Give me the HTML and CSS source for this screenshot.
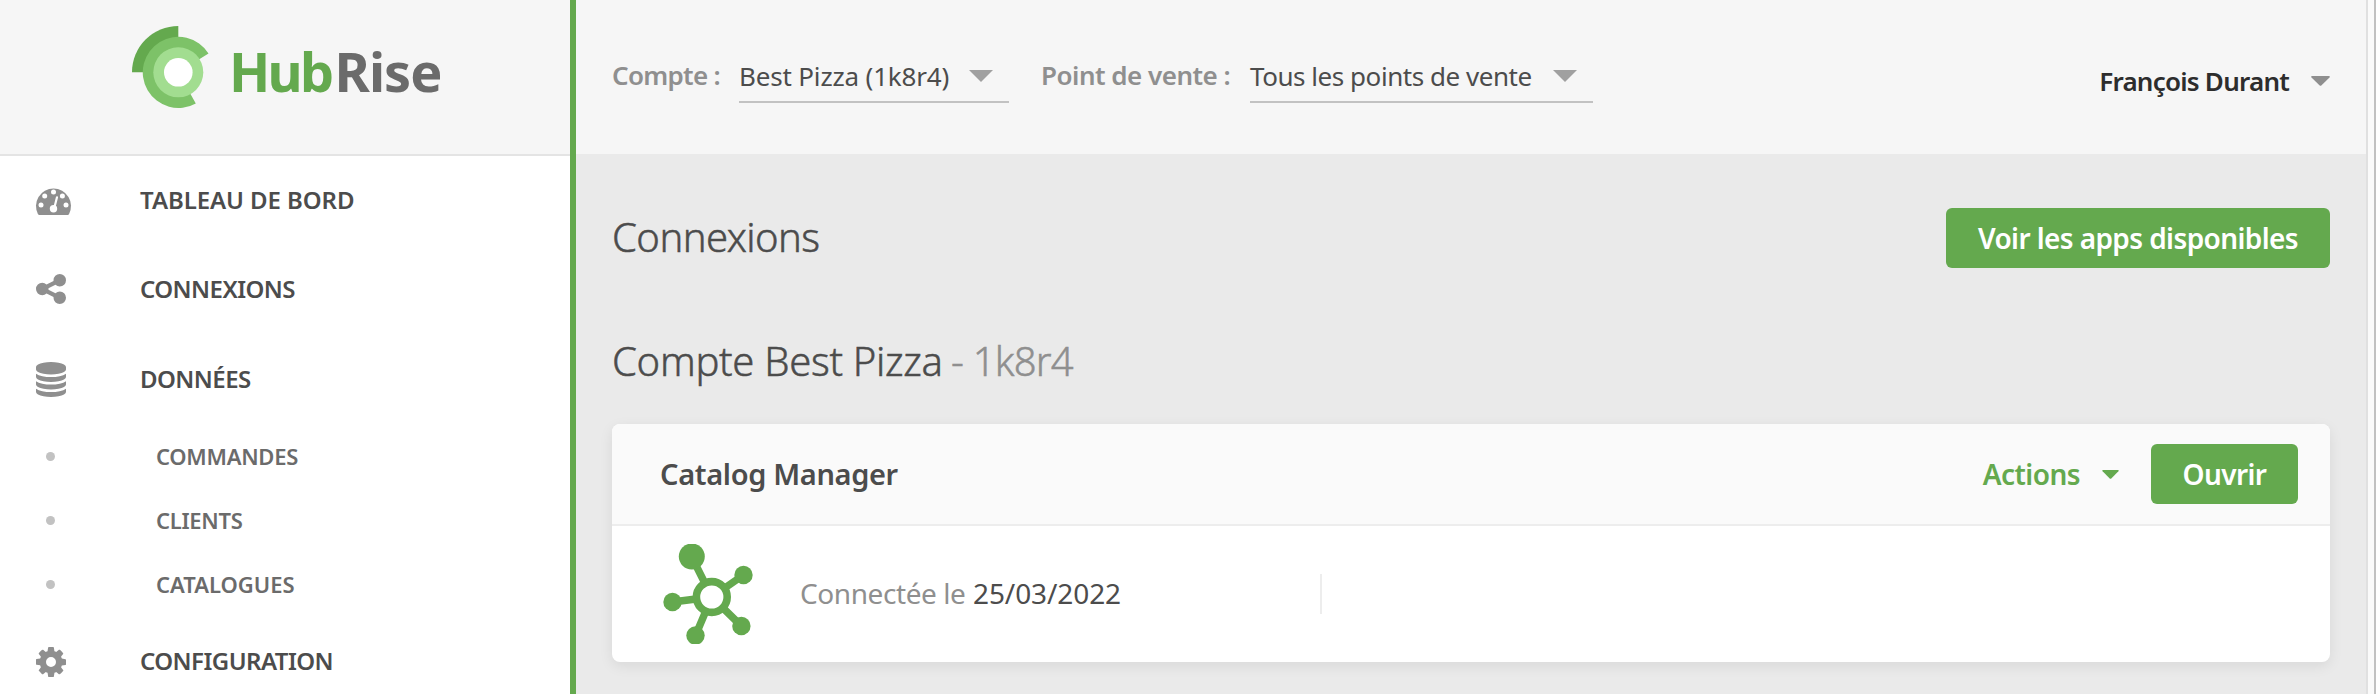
FILE: index.html
```html
<!DOCTYPE html>
<html lang="fr">
<head>
<meta charset="utf-8">
<title>HubRise - Connexions</title>
<link rel="stylesheet" href="styles.css">
</head>
<body>
<div class="app">
  <aside class="sidebar">
    <div class="brand">
      <svg class="brand-mark" viewBox="0 0 80 84" width="80" height="84">
        <path fill="#64a94e" d="M0 46.3A46.3 46.3 0 0 1 46.3 0V46.3Z"/>
        <path fill="#7dc268" d="M46.3 46.3L76.5 27.4A35.6 35.6 0 1 0 63.8 77.4Z"/>
        <circle cx="46.3" cy="46.3" r="25" fill="#a2dd90"/>
        <circle cx="46.3" cy="46.3" r="14.3" fill="#fff"/>
      </svg>
      <div class="brand-name"><span class="brand-hub">Hub</span><span class="brand-rise">Rise</span></div>
    </div>
    <nav class="nav">
      <a class="nav-item nav-first">
        <span class="nav-icon"><svg class="gauge" viewBox="0 0 35 28" width="35" height="28"><path fill="#8f8f8f" fill-rule="evenodd" d="M3.4 28Q2.5 28 2 27.200A17.500 17.500 0 1 1 33 27.200Q32.500 28 31.600 28Z"/><g fill="#fff"><circle cx="5" cy="17.900" r="2.500"/><circle cx="8.700" cy="8.900" r="2.500"/><circle cx="17.500" cy="5.100" r="2.500"/><circle cx="26.400" cy="8.900" r="2.500"/><circle cx="30" cy="17.900" r="2.500"/><circle cx="17.500" cy="21.700" r="3.700"/></g><path d="M21 10.300L18.400 20.500" stroke="#fff" stroke-width="2.200" stroke-linecap="round"/></svg></span>
        <span class="nav-text loose">TABLEAU DE BORD</span>
      </a>
      <a class="nav-item">
        <span class="nav-icon"><svg viewBox="128 128 1536 1536" width="30" height="30"><path fill="#8f8f8f" d="M1344 1024q133 0 226.500 93.500t93.500 226.500-93.500 226.500-226.500 93.500-226.500-93.500-93.500-226.500q0-12 2-34l-360-180q-92 86-218 86-133 0-226.500-93.500t-93.500-226.500 93.500-226.500 226.500-93.500q126 0 218 86l360-180q-2-22-2-34 0-133 93.500-226.500t226.500-93.500 226.500 93.500 93.500 226.500-93.500 226.500-226.500 93.500q-126 0-218-86l-360 180q2 22 2 34t-2 34l360 180q92-86 218-86z"/></svg></span>
        <span class="nav-text">CONNEXIONS</span>
      </a>
      <a class="nav-item">
        <span class="nav-icon"><svg viewBox="128 0 1536 1792" width="30" height="35"><path fill="#8f8f8f" d="M896 768q237 0 443-43t325-127v170q0 69-103 128t-280 93.500-385 34.500-385-34.500-280-93.500-103-128v-170q119 84 325 127t443 43zm0 768q237 0 443-43t325-127v170q0 69-103 128t-280 93.500-385 34.500-385-34.500-280-93.500-103-128v-170q119 84 325 127t443 43zm0-384q237 0 443-43t325-127v170q0 69-103 128t-280 93.500-385 34.500-385-34.500-280-93.500-103-128v-170q119 84 325 127t443 43zm0-1152q208 0 385 34.500t280 93.500 103 128v128q0 69-103 128t-280 93.500-385 34.500-385-34.500-280-93.500-103-128v-128q0-69 103-128t280-93.500 385-34.500z"/></svg></span>
        <span class="nav-text">DONNÉES</span>
      </a>
      <a class="nav-sub"><span class="dot"></span><span>COMMANDES</span></a>
      <a class="nav-sub"><span class="dot"></span><span>CLIENTS</span></a>
      <a class="nav-sub wide"><span class="dot"></span><span>CATALOGUES</span></a>
      <a class="nav-item">
        <span class="nav-icon"><svg class="cog" viewBox="128 128 1536 1536" width="30" height="30"><path fill="#8f8f8f" d="M1152 896q0-106-75-181t-181-75-181 75-75 181 75 181 181 75 181-75 75-181zm512-109v222q0 12-8 23t-20 13l-185 28q-19 54-39 91 35 50 107 138 10 12 10 25t-9 23q-27 37-99 108t-94 71q-12 0-26-9l-138-108q-44 23-91 38-16 136-29 186-7 28-36 28h-222q-14 0-24.500-8.500t-11.500-21.500l-28-184q-49-16-90-37l-141 107q-10 9-25 9-14 0-25-11-126-114-165-168-7-10-7-23 0-12 8-23 15-21 51-66.500t54-70.500q-27-50-41-99l-183-27q-13-2-21-12.500t-8-23.500v-222q0-12 8-23t19-13l186-28q14-46 39-92-40-57-107-138-10-12-10-24 0-10 9-23 26-36 98.500-107.500t94.500-71.500q13 0 26 10l138 107q44-23 91-38 16-136 29-186 7-28 36-28h222q14 0 24.500 8.500t11.500 21.500l28 184q49 16 90 37l142-107q9-9 24-9 13 0 25 10 129 119 165 170 7 8 7 22 0 12-8 23-15 21-51 66.500t-54 70.500q26 50 41 98l183 28q13 2 21 12.500t8 23.500z"/></svg></span>
        <span class="nav-text">CONFIGURATION</span>
      </a>
    </nav>
  </aside>

  <div class="main">
    <header class="topbar">
      <span class="label label-account">Compte :</span>
      <div class="select select-account"><span>Best Pizza (1k8r4)</span><svg width="24" height="12" viewBox="0 0 24 12"><path fill="#a0a0a0" d="M0 0H24L12 12Z"/></svg></div>
      <span class="label label-location">Point de vente :</span>
      <div class="select select-location"><span>Tous les points de vente</span><svg width="24" height="12" viewBox="0 0 24 12"><path fill="#a0a0a0" d="M0 0H24L12 12Z"/></svg></div>
      <div class="user"><span>François Durant</span><svg width="19" height="10" viewBox="0 0 19 10"><path fill="#8f8f8f" d="M1 0H18Q19.400.200 18.500 1.400L10.300 9.500Q9.500 10.200 8.700 9.500L.5 1.400Q-.4.200 1 0Z"/></svg></div>
    </header>

    <main class="content">
      <div class="title-row">
        <h1 class="title">Connexions</h1>
        <button class="btn btn-apps">Voir les apps disponibles</button>
      </div>
      <h2 class="section"><span class="section-name">Compte Best Pizza</span><span class="section-id">- 1k8r4</span></h2>

      <section class="card">
        <div class="card-head">
          <h3 class="card-title">Catalog Manager</h3>
          <div class="actions"><span>Actions</span><svg width="17" height="9" viewBox="0 0 17 9"><path fill="#64a94e" d="M1 0H16Q17.300.200 16.400 1.300L9.300 8.500Q8.500 9.200 7.700 8.500L.6 1.300Q-.3.200 1 0Z"/></svg></div>
          <button class="btn btn-open">Ouvrir</button>
        </div>
        <div class="card-body">
          <svg class="app-icon" viewBox="0 0 100 100" width="100" height="100">
            <path fill="none" stroke="#64a94e" stroke-width="7.400" d="M31.800 13L51.800 53M83.500 31L51.800 53M51.800 53L81.400 82M51.800 53L35.500 91.500M51.800 53L12.500 58"/>
            <g fill="#64a94e"><ellipse cx="31.800" cy="12.500" rx="13" ry="13"/><circle cx="83.500" cy="31" r="9.200"/><circle cx="81.400" cy="82" r="9.200"/><circle cx="35.500" cy="91.500" r="9.200"/><circle cx="12.500" cy="58" r="9.200"/></g>
            <circle cx="51.800" cy="53" r="15.400" fill="#fff" stroke="#64a94e" stroke-width="7.600"/>
          </svg>
          <p class="connected"><span class="connected-label">Connectée le</span><span class="connected-date">25/03/2022</span></p>
          <span class="divider"></span>
        </div>
      </section>
    </main>
  </div>
  <div class="scroll-track"></div>
</div>
</body>
</html>
```
FILE: styles.css
```css
* { box-sizing: border-box; }
body {
  margin: 0;
  font-family: "Noto Sans", "Open Sans", sans-serif;
  color: #4c4c4c;
  background: #eaeaea;
}
h1, h2, h3, p { margin: 0; }
svg { display: block; flex: none; }
.app { display: flex; height: 694px; overflow: hidden; white-space: nowrap; }

/* Sidebar */
.sidebar { flex: none; width: 576px; background: #fff; border-right: 6px solid #64a94e; }
.brand {
  display: flex;
  align-items: flex-start;
  height: 156px;
  padding: 26px 0 0 132px;
  background: #f6f6f6;
  border-bottom: 2px solid #e4e4e4;
}
.brand-name { display: flex; margin-left: 17px; font-size: 54px; font-weight: 700; line-height: 91px; }
.brand-hub { color: #64a94e; letter-spacing: -2.7px; }
.brand-rise { margin-left: 3px; color: #6b6b6b; letter-spacing: -1px; }
.nav-item { display: flex; align-items: center; height: 90px; }
.nav-first { height: 88px; }
.nav-icon { width: 104px; padding-left: 36px; flex: none; }
.nav-icon svg { overflow: visible; }
.gauge, .cog { margin-top: 2px; }
.nav-text { padding: 0 0 2px 36px; font-size: 24px; font-weight: 600; letter-spacing: -0.55px; }
.nav-text.loose { letter-spacing: -0.08px; }
.nav-sub {
  display: flex;
  align-items: center;
  height: 64px;
  padding-left: 46px;
  gap: 101px;
  font-size: 22px;
  font-weight: 600;
  letter-spacing: -0.28px;
  color: #6b6b6b;
}
.nav-sub.wide { letter-spacing: -0.02px; }
.dot { width: 9px; height: 9px; border-radius: 50%; background: #c2c2c2; }

/* Top bar */
.main { flex: 1; min-width: 0; }
.topbar {
  display: flex;
  align-items: flex-start;
  height: 154px;
  padding: 51px 36px 0;
  background: #f6f6f6;
  font-size: 26px;
}
.label { line-height: 48px; font-weight: 600; color: #8f8f8f; }
.label-account { width: 127px; letter-spacing: -0.7px; }
.label-location { width: 209px; margin-left: 32px; letter-spacing: -0.5px; }
.select {
  display: flex;
  align-items: center;
  justify-content: space-between;
  height: 52px;
  padding-right: 16px;
  line-height: 50px;
  border-bottom: 2px solid #c2c2c2;
}
.select-account { width: 270px; letter-spacing: -0.17px; }
.select-location { width: 343px; letter-spacing: -0.46px; }
.user {
  display: flex;
  align-items: center;
  gap: 22px;
  margin-left: auto;
  line-height: 60px;
  font-weight: 600;
  letter-spacing: -0.77px;
  color: #2d2d2d;
}
.user svg { margin-bottom: 1px; }

/* Content */
.content { padding: 54px 36px 0; }
.title-row { display: flex; justify-content: space-between; align-items: flex-start; }
.title, .section { font-size: 40px; font-weight: 300; -webkit-text-stroke: 0.5px; }
.title { line-height: 58px; letter-spacing: -0.56px; }
.section { display: flex; margin: 60px 0 31px; line-height: 65px; }
.section-name { width: 339px; letter-spacing: -0.3px; }
.section-id { letter-spacing: -0.8px; color: #8f8f8f; }
.btn {
  height: 60px;
  padding: 0;
  border: 0;
  border-radius: 6px;
  background: #64a94e;
  color: #fff;
  font: 600 28px/60px "Noto Sans", "Open Sans", sans-serif;
  letter-spacing: -0.6px;
}
.btn-apps { width: 384px; }
.btn-open { width: 147px; }

.card { border-radius: 8px; background: #fff; box-shadow: 0 4px 14px rgba(0, 0, 0, 0.08); }
.card-head {
  display: flex;
  align-items: center;
  height: 102px;
  padding: 0 32px 0 48px;
  background: #fafafa;
  border-bottom: 2px solid #ededed;
  border-radius: 8px 8px 0 0;
}
.card-title { padding-bottom: 2px; font-size: 29px; font-weight: 600; letter-spacing: -0.35px; }
.actions {
  display: flex;
  align-items: center;
  gap: 22px;
  margin: 0 32px 0 auto;
  font-size: 28px;
  font-weight: 600;
  letter-spacing: -0.55px;
  color: #64a94e;
}
.card-body { display: flex; align-items: center; height: 136px; padding-left: 48px; }
.connected { display: flex; width: 520px; margin-left: 40px; padding-bottom: 3px; font-size: 28px; }
.connected-label { width: 173px; letter-spacing: -0.42px; color: #8f8f8f; }
.connected-date { letter-spacing: -0.1px; }
.divider { width: 2px; height: 40px; background: #ededed; }

/* Scrollbar gutter */
.scroll-track {
  flex: none;
  width: 10px;
  background: #fafafa;
  border-left: 2px solid #e0e0e0;
  border-right: 2px solid #c1c1c1;
}
```
